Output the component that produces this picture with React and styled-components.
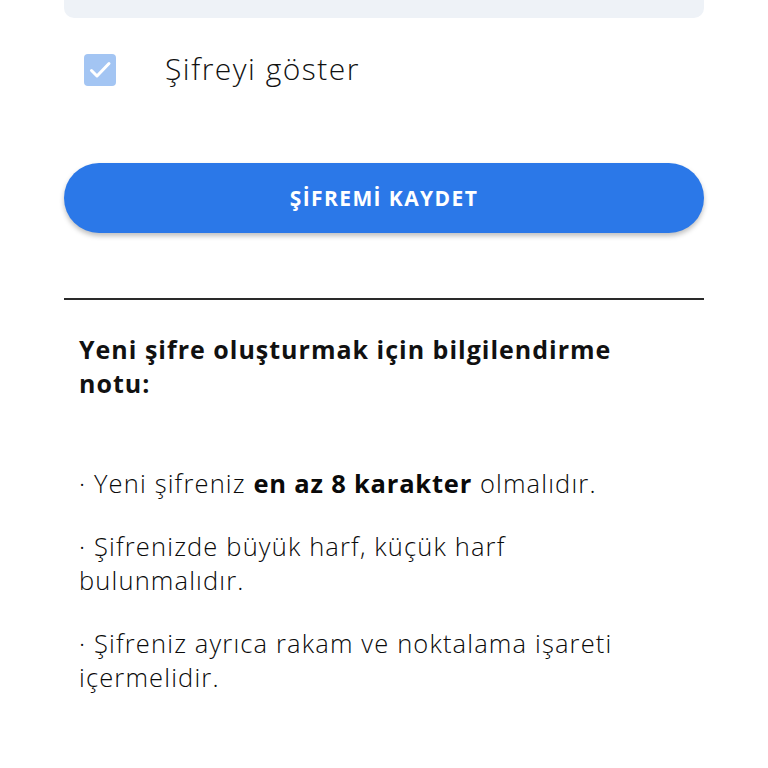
import React, { useState } from 'react'
import styled, { createGlobalStyle } from 'styled-components'

const Global = createGlobalStyle`
    body {
        margin: 0;
        background: #fff;
        font-family: 'Open Sans', 'Noto Sans', sans-serif;
        color: #111;
    }
`

const Page = styled.div`
    width: 768px;
    padding: 0 64px;
    box-sizing: border-box;
`

const InputBox = styled.div`
    height: 18px;
    background: #eef2f7;
    border-radius: 0 0 10px 10px;
`

const CheckRow = styled.label`
    display: flex;
    align-items: center;
    gap: 49px;
    margin-top: 36px;
    padding-left: 20px;
    height: 32px;
    cursor: pointer;
`

const Box = styled.span`
    width: 32px;
    height: 32px;
    border-radius: 4px;
    background: ${({ checked }) => (checked ? '#a3c5f3' : '#fff')};
    border: ${({ checked }) => (checked ? 'none' : '2px solid #a3c5f3')};
    display: flex;
    align-items: center;
    justify-content: center;
`

const CheckText = styled.span`
    font-size: 30px;
    font-weight: 300;
    letter-spacing: 1.5px;
    color: #111;
    margin-top: -3px;
`

const SaveButton = styled.button`
    display: block;
    width: 100%;
    height: 70px;
    margin-top: 77px;
    border: none;
    border-radius: 35px;
    background: #2b78e8;
    box-shadow: 0 3px 5px rgba(0, 0, 0, 0.25);
    color: #fff;
    font-family: 'Open Sans', sans-serif;
    font-weight: 700;
    font-size: 21px;
    letter-spacing: 1.4px;
`

const Divider = styled.hr`
    margin: 65px 0 0;
    border: none;
    border-top: 2px solid #2a2a2a;
`

const Info = styled.div`
    padding: 0 40px 0 15px;
`

const Heading = styled.h2`
    margin: 32px 0 0;
    font-size: 25px;
    font-weight: 700;
    line-height: 34px;
    letter-spacing: 1px;
    color: #111;
`

const Notes = styled.div`
    margin-top: 66px;
    display: flex;
    flex-direction: column;
    gap: 29px;
`

const Note = styled.p`
    margin: 0;
    font-size: 25.5px;
    font-weight: 300;
    line-height: 34px;
    letter-spacing: 1.15px;
    color: #0a0a0a;

    b {
        font-weight: 700;
        letter-spacing: 0.8px;
    }
`

const App = () => {
    const [show, setShow] = useState(true)
    return (
        <Page>
            <Global />
            <InputBox />
            <CheckRow onClick={() => setShow(!show)}>
                <Box checked={show}>
                    {show && (
                        <svg width="24" height="24" viewBox="0 0 24 24" fill="none" stroke="#fff" strokeWidth="3" strokeLinecap="round" strokeLinejoin="round">
                            <path d="M3.5 12.5l5.5 5.5L21 5.5" />
                        </svg>
                    )}
                </Box>
                <CheckText>Şifreyi göster</CheckText>
            </CheckRow>
            <SaveButton>ŞİFREMİ KAYDET</SaveButton>
            <Divider />
            <Info>
                <Heading>Yeni şifre oluşturmak için bilgilendirme notu:</Heading>
                <Notes>
                    <Note>· Yeni şifreniz <b>en az 8 karakter</b> olmalıdır.</Note>
                    <Note>· Şifrenizde büyük harf, küçük harf bulunmalıdır.</Note>
                    <Note>· Şifreniz ayrıca rakam ve noktalama işareti içermelidir.</Note>
                </Notes>
            </Info>
        </Page>
    )
}

export default App
